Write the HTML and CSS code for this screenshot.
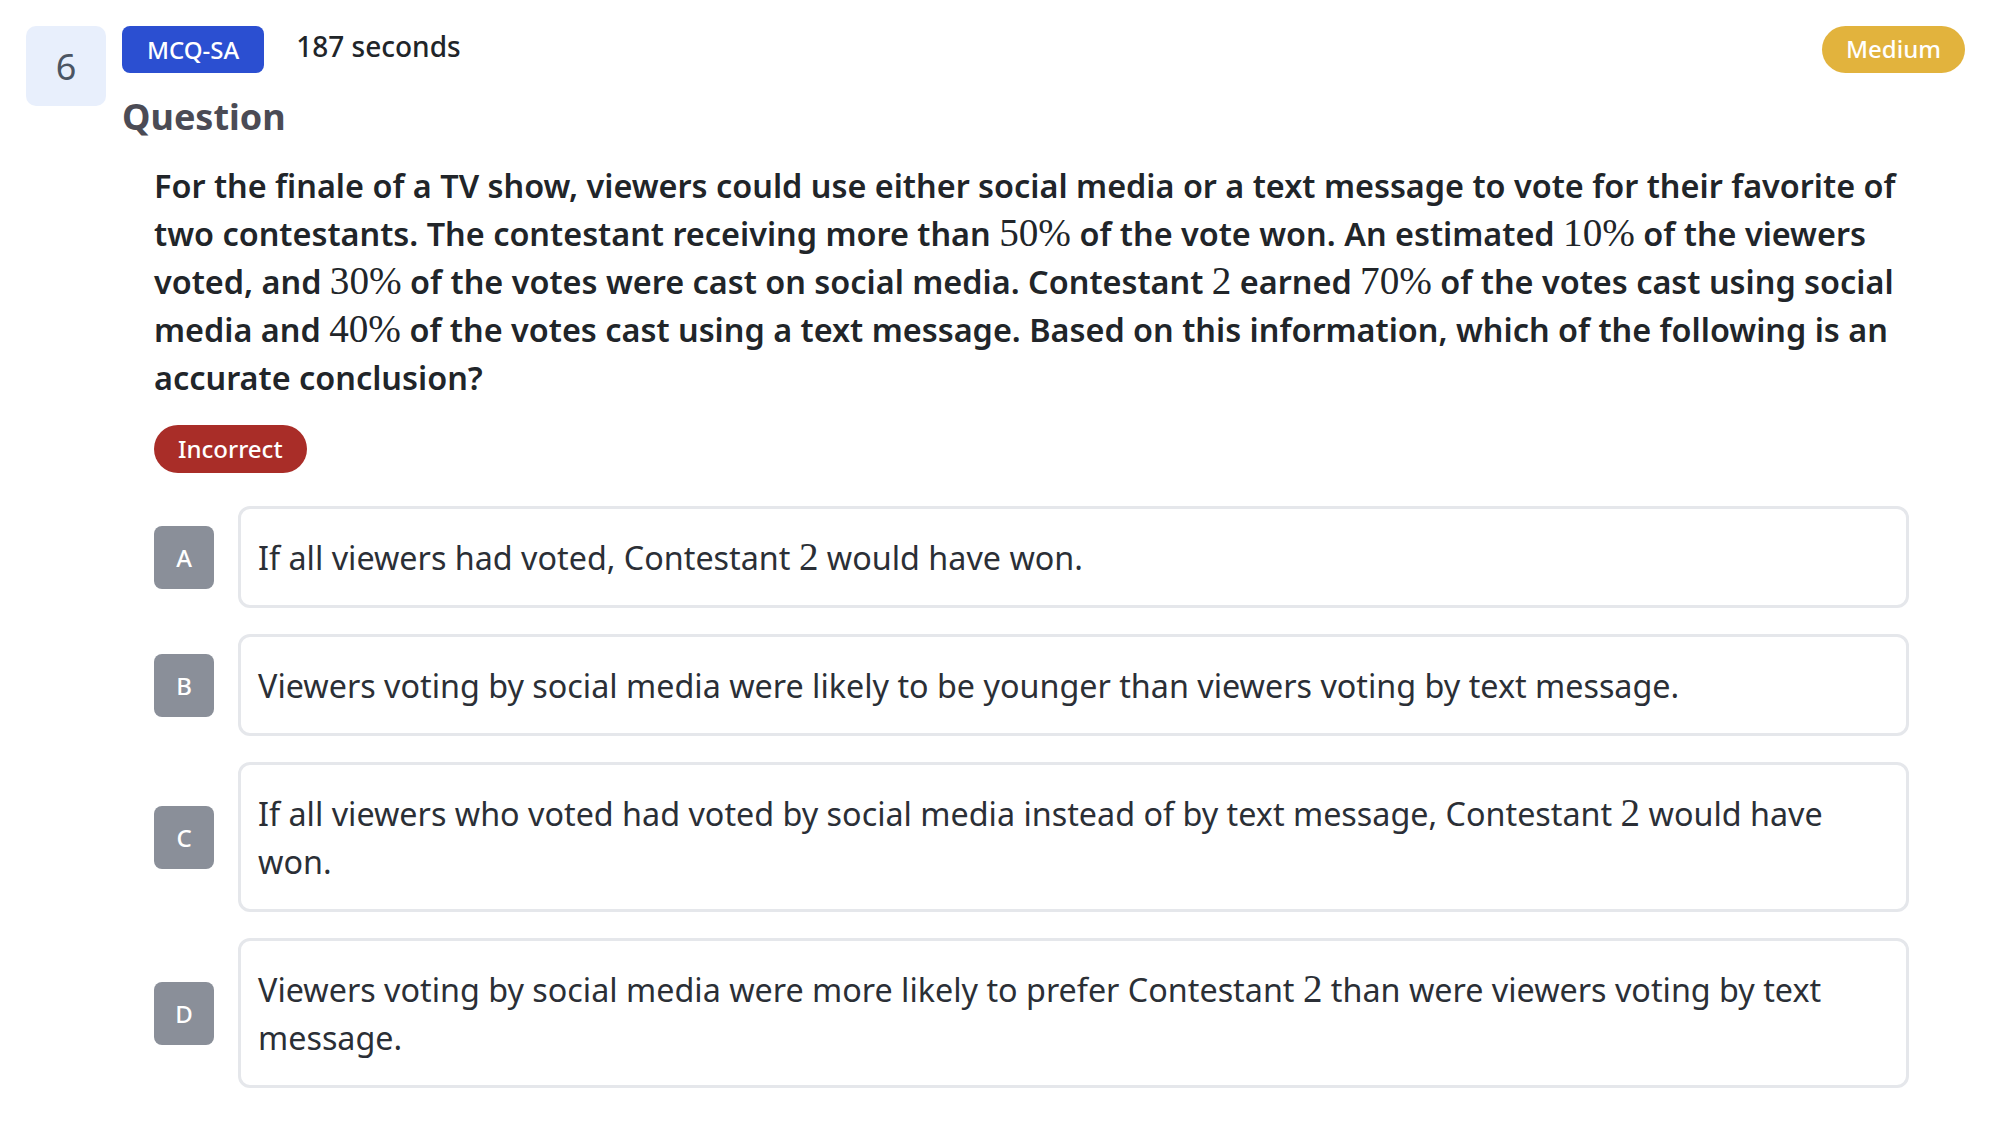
FILE: index.html
```html
<!DOCTYPE html>
<html lang="en">
<head>
<meta charset="utf-8">
<title>Question 6</title>
<link rel="stylesheet" href="styles.css">
</head>
<body>
<div class="card">
  <div class="num">6</div>
  <div class="main">
    <div class="top-row">
      <div class="meta">
        <span class="badge type">MCQ-SA</span>
        <span class="time">187 seconds</span>
      </div>
      <span class="badge level">Medium</span>
    </div>
    <h2 class="heading">Question</h2>
    <div class="body">
      <p class="stem">For the finale of a TV show, viewers could use either social media or a text message to vote for their favorite of two contestants. The contestant receiving more than <span class="m">50%</span> of the vote won. An estimated <span class="m">10%</span> of the viewers voted, and <span class="m">30%</span> of the votes were cast on social media. Contestant <span class="m">2</span> earned <span class="m">70%</span> of the votes cast using social media and <span class="m">40%</span> of the votes cast using a text message. Based on this information, which of the following is an accurate conclusion?</p>
      <div class="status"><span class="badge wrong">Incorrect</span></div>
      <div class="options">
        <div class="option">
          <div class="letter">A</div>
          <div class="choice">If all viewers had voted, Contestant <span class="m">2</span> would have won.</div>
        </div>
        <div class="option">
          <div class="letter">B</div>
          <div class="choice">Viewers voting by social media were likely to be younger than viewers voting by text message.</div>
        </div>
        <div class="option">
          <div class="letter">C</div>
          <div class="choice">If all viewers who voted had voted by social media instead of by text message, Contestant <span class="m">2</span> would have won.</div>
        </div>
        <div class="option">
          <div class="letter">D</div>
          <div class="choice">Viewers voting by social media were more likely to prefer Contestant <span class="m">2</span> than were viewers voting by text message.</div>
        </div>
      </div>
    </div>
  </div>
</div>
</body>
</html>
```
FILE: styles.css
```css
* { box-sizing: border-box; }
html, body { margin: 0; padding: 0; background: #ffffff; }
body {
  font-family: "Noto Sans", "Open Sans", "Liberation Sans", sans-serif;
  color: #212529;
}
.card {
  display: flex;
  align-items: flex-start;
  gap: 16px;
  padding: 26px 49px 20px 26px;
}
.num {
  flex: 0 0 80px;
  width: 80px;
  height: 80px;
  border-radius: 10px;
  background: #e8effc;
  color: #4b5563;
  font-size: 36px;
  display: flex;
  align-items: center;
  justify-content: center;
}
.main { flex: 1; min-width: 0; }
.top-row {
  display: flex;
  justify-content: space-between;
  align-items: flex-start;
}
.meta {
  display: flex;
  align-items: flex-start;
  gap: 32px;
}
.badge {
  display: inline-block;
  font-size: 24px;
  line-height: 36px;
  font-weight: 500;
  color: #ffffff;
  white-space: nowrap;
}
.type {
  background: #2b4fd1;
  border-radius: 8px;
  padding: 6px 25px 5px;
}
.time {
  font-size: 28px;
  line-height: 40px;
  font-weight: 500;
  color: #212529;
}
.level {
  background: #e2b33d;
  border-radius: 24px;
  padding: 5px 24px 6px;
}
.heading {
  margin: 22px 0 0;
  font-size: 36px;
  line-height: 43px;
  font-weight: 700;
  color: #4b4b55;
}
.body {
  padding-left: 32px;
  margin-right: 56px;
  margin-top: 23px;
}
.stem {
  margin: 0;
  font-size: 32.4px;
  line-height: 48px;
  font-weight: 600;
  color: #212529;
}
.m {
  font-family: "Liberation Serif", "DejaVu Serif", serif;
  font-weight: 400;
  font-size: 1.21em;
  line-height: 1;
}
.status { margin-top: 24px; }
.wrong {
  background: #a92d28;
  border-radius: 24px;
  padding: 6px 24px;
}
.options {
  margin-top: 33px;
  display: flex;
  flex-direction: column;
  gap: 26px;
}
.option {
  display: flex;
  align-items: center;
  gap: 24px;
}
.letter {
  flex: 0 0 60px;
  height: 63px;
  border-radius: 8px;
  background: #8a8f99;
  color: #ffffff;
  font-size: 24px;
  font-weight: 500;
  display: flex;
  align-items: center;
  justify-content: center;
}
.choice {
  flex: 1;
  border: 3px solid #e5e7eb;
  border-radius: 12px;
  padding: 24px 24px 24px 17px;
  font-size: 32.3px;
  line-height: 48px;
  color: #2b2f36;
}
```
